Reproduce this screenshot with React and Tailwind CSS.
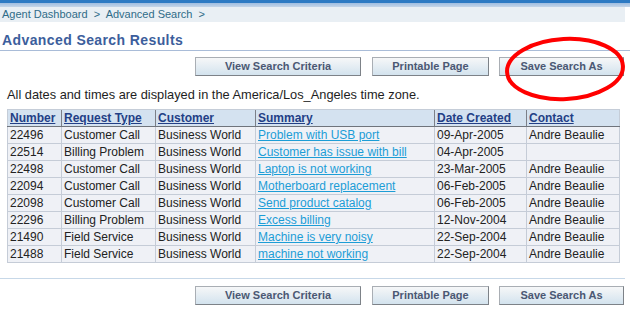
import React from "react";

const rows = [
  ["22496", "Customer Call", "Business World", "Problem with USB port", "09-Apr-2005", "Andre Beaulie"],
  ["22514", "Billing Problem", "Business World", "Customer has issue with bill", "04-Apr-2005", ""],
  ["22498", "Customer Call", "Business World", "Laptop is not working", "23-Mar-2005", "Andre Beaulie"],
  ["22094", "Customer Call", "Business World", "Motherboard replacement", "06-Feb-2005", "Andre Beaulie"],
  ["22098", "Customer Call", "Business World", "Send product catalog", "06-Feb-2005", "Andre Beaulie"],
  ["22296", "Billing Problem", "Business World", "Excess billing", "12-Nov-2004", "Andre Beaulie"],
  ["21490", "Field Service", "Business World", "Machine is very noisy", "22-Sep-2004", "Andre Beaulie"],
  ["21488", "Field Service", "Business World", "machine not working", "22-Sep-2004", "Andre Beaulie"],
];

const headers = ["Number", "Request Type", "Customer", "Summary", "Date Created", "Contact"];
const widths = ["w-[54px]", "w-[94px]", "w-[100px]", "w-[179px]", "w-[92px]", "w-[93px]"];

function Btn({ label, w, className = "" }) {
  return (
    <button
      className={`${w} ${className} h-[19px] border border-[#a9aeb4] border-r-[#7d8288] border-b-[#7d8288] bg-gradient-to-b from-[#f6f7f8] to-[#d3e3ee] text-[11px] font-bold text-[#4b5873] leading-none`}
    >
      {label}
    </button>
  );
}

function ButtonRow({ className = "" }) {
  return (
    <div className={`flex justify-end pr-[6px] ${className}`}>
      <Btn label="View Search Criteria" w="w-[166px]" />
      <Btn label="Printable Page" w="w-[117px]" className="ml-[11px]" />
      <Btn label="Save Search As" w="w-[125px]" className="ml-[10px]" />
    </div>
  );
}

export default function App() {
  return (
    <div className="relative w-[630px] h-[311px] bg-white overflow-hidden font-['Liberation_Sans',Arial,sans-serif] text-[#222]">
      <div className="h-[3px] bg-[#2d7ac3]" />
      <div className="h-[4px] bg-gradient-to-b from-[#9fbde0] to-[#c4d5e8]" />
      <div className="w-[625px] h-[15px] bg-[#e9eff4] flex items-center pl-[2px] text-[11px] text-[#2f6c88] whitespace-pre">
        Agent Dashboard  &gt;  Advanced Search  &gt;
      </div>

      <div className="pt-[10px] pb-[1px] border-b border-[#a9bcd8]">
        <h1 className="pl-[2px] text-[14px] leading-[17px] font-bold tracking-[0.4px] text-[#3c5e9c]">
          Advanced Search Results
        </h1>
      </div>

      <ButtonRow className="mt-[6px]" />

      <p className="mt-[11px] pl-[7px] text-[12.8px] leading-[15px] text-[#1e1e1e]">
        All dates and times are displayed in the America/Los_Angeles time zone.
      </p>

      <table className="mt-[7px] ml-[7px] w-[612px] border-collapse table-fixed text-[12px] leading-[16px]">
        <thead>
          <tr className="bg-[#d4e2f0]">
            {headers.map((h, i) => (
              <th
                key={h}
                className={`${widths[i]} h-[16px] px-[2px] text-left font-bold border-b border-b-[#6f747c] border-t border-t-[#c5cdd8] ${i > 0 ? "border-l border-l-[#7c8088]" : "border-l border-l-[#c5cdd8]"} ${i === 5 ? "border-r border-r-[#c5cdd8]" : ""}`}
              >
                <span className="underline text-[#233f86] text-[12px]">{h}</span>
              </th>
            ))}
          </tr>
        </thead>
        <tbody>
          {rows.map((r) => (
            <tr key={r[0]} className="bg-[#eff1f6]">
              {r.map((c, i) => (
                <td
                  key={i}
                  className="h-[17px] px-[2px] border border-[#c5ccd7] whitespace-nowrap overflow-hidden"
                >
                  {i === 3 ? <span className="underline text-[#1c9dd6]">{c}</span> : c}
                </td>
              ))}
            </tr>
          ))}
        </tbody>
      </table>

      <div className="mt-[15px] w-[625px] h-px bg-[#c7d8e8]" />

      <ButtonRow className="mt-[7px]" />

      <svg className="absolute left-[502px] top-[34px]" width="126" height="70" viewBox="0 0 126 70">
        <ellipse cx="63" cy="35" rx="58" ry="30" fill="none" stroke="#ff0000" strokeWidth="4" transform="rotate(-3 63 35)" />
      </svg>
    </div>
  );
}
